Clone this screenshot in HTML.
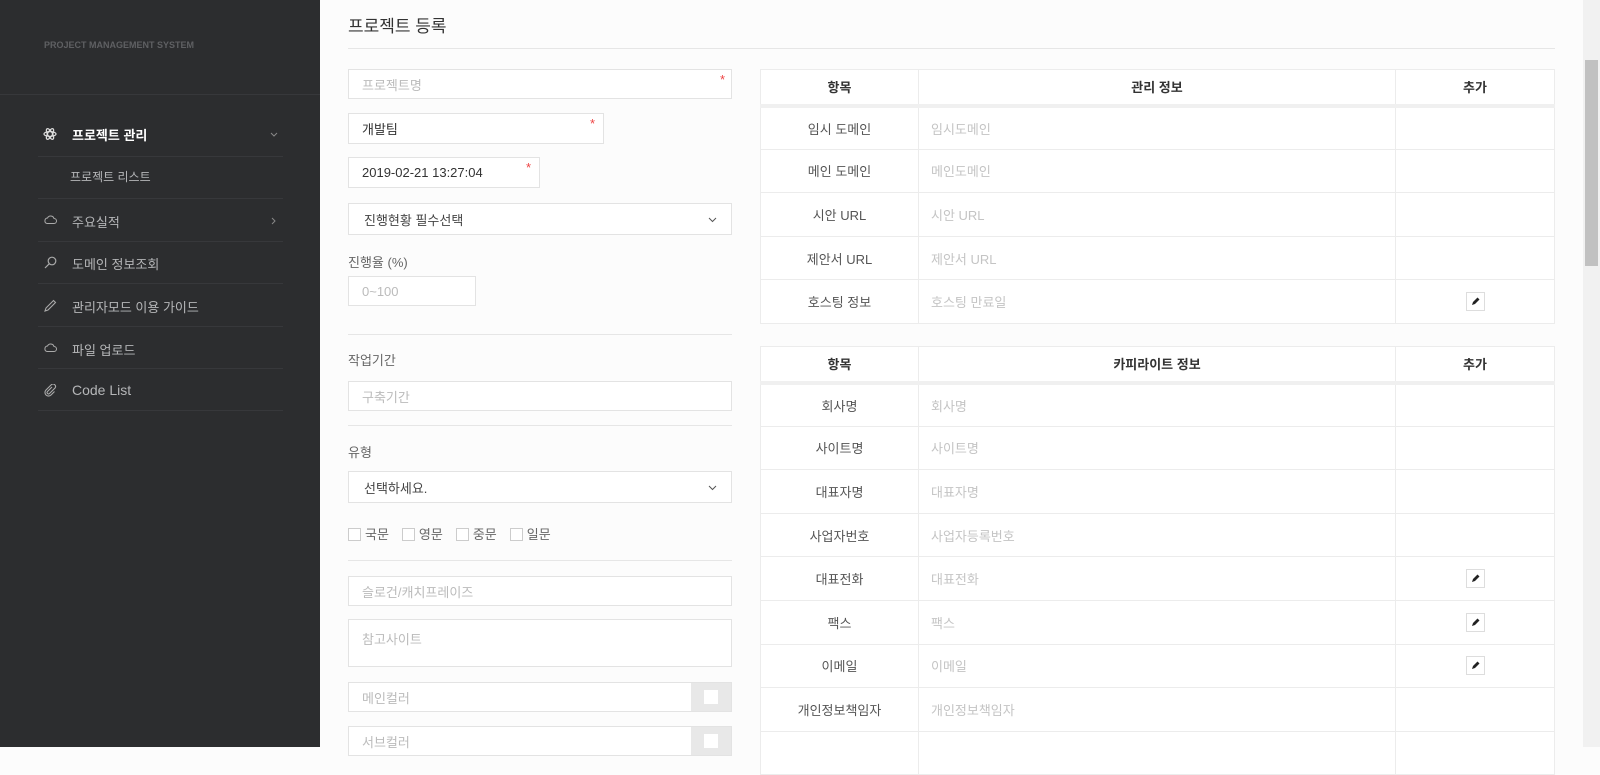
<!DOCTYPE html>
<html><head><meta charset="utf-8"><style>
*{box-sizing:border-box;margin:0;padding:0}
body{width:1600px;height:747px;overflow:hidden;background:#fcfcfc;font-family:"Liberation Sans","Noto Sans CJK KR",sans-serif;font-size:13px;color:#333;position:relative}
.sb{position:absolute;left:0;top:0;width:320px;height:747px;background:#2c2d2f}
.a{position:absolute}
.logo{left:44px;top:40px;font-size:9px;font-weight:bold;color:#5f6063;letter-spacing:0}
.sbl{height:1px;background:#37383b}
.mi{color:#b5b6b8;font-size:13px}
.inp{position:absolute;background:#fff;border:1px solid #e3e3e3;color:#bbb;padding-left:13px;display:flex;align-items:center;font-size:13px}
.lbl{position:absolute;color:#666;font-size:13px}
.hr{position:absolute;left:348px;width:384px;height:1px;background:#e6e6e6}
.star{position:absolute;color:#e44;font-size:13px;top:2px}
table{position:absolute;border-collapse:collapse;background:#fff;left:760px;width:795px;font-size:13px}
td,th{border:1px solid #ececec;height:43.6px}
th{height:36px;font-weight:bold;color:#333;border-bottom:4px solid #f0f0f0}
td.k{text-align:center;color:#555;width:158px}
td.v{color:#c4c4c4;padding-left:12px;width:477px}
.ed{display:inline-block;width:19px;height:19px;border:1px solid #ddd;background:#fff;vertical-align:middle;position:relative}
.chk{display:inline-block;width:13px;height:13px;border:1px solid #ccc;background:#fff;vertical-align:-2px;margin-right:4px}
</style></head><body>
<div class="sb">
<div class="a logo">PROJECT MANAGEMENT SYSTEM</div>
<div class="a sbl" style="left:0;top:94px;width:320px"></div>
<svg class="a" style="left:43px;top:127px" width="14" height="14" viewBox="0 0 14 14" fill="none" stroke="#ddd" stroke-width="1.2"><ellipse cx="7" cy="7" rx="6" ry="2.4"/><ellipse cx="7" cy="7" rx="6" ry="2.4" transform="rotate(60 7 7)"/><ellipse cx="7" cy="7" rx="6" ry="2.4" transform="rotate(120 7 7)"/></svg>
<div class="a" style="left:72px;top:125px;color:#fff;font-weight:bold;font-size:13px">프로젝트 관리</div>
<svg class="a" style="left:270px;top:132px" width="8" height="5" viewBox="0 0 8 5" fill="none" stroke="#888"><path d="M1 1l3 3 3-3"/></svg>
<div class="a sbl" style="left:38px;top:156px;width:245px"></div>
<div class="a mi" style="left:70px;top:168px;font-size:12px">프로젝트 리스트</div>
<div class="a sbl" style="left:38px;top:198px;width:245px"></div>
<svg class="a" style="left:44px;top:215px" width="13" height="9" viewBox="0 0 13 9" fill="none" stroke="#aaa" stroke-width="1"><path d="M3 8.5h7a2.5 2.5 0 0 0 0-5 3.5 3.5 0 0 0-6.5-.5A2.8 2.8 0 0 0 3 8.5z"/></svg>
<div class="a mi" style="left:72px;top:212px">주요실적</div>
<svg class="a" style="left:271px;top:217px" width="5" height="8" viewBox="0 0 5 8" fill="none" stroke="#888"><path d="M1 1l3 3-3 3"/></svg>
<div class="a sbl" style="left:38px;top:241px;width:245px"></div>
<svg class="a" style="left:44px;top:256px" width="13" height="13" viewBox="0 0 13 13" fill="none" stroke="#aaa" stroke-width="1.2"><circle cx="8" cy="5" r="3.8"/><path d="M5.2 7.8L1 12"/></svg>
<div class="a mi" style="left:72px;top:254px">도메인 정보조회</div>
<div class="a sbl" style="left:38px;top:283px;width:245px"></div>
<svg class="a" style="left:44px;top:299px" width="13" height="13" viewBox="0 0 13 13" fill="none" stroke="#aaa" stroke-width="1.1"><path d="M9.5 1.5l2 2L4 11l-3 1 1-3z"/></svg>
<div class="a mi" style="left:72px;top:297px">관리자모드 이용 가이드</div>
<div class="a sbl" style="left:38px;top:326px;width:245px"></div>
<svg class="a" style="left:44px;top:343px" width="13" height="9" viewBox="0 0 13 9" fill="none" stroke="#aaa" stroke-width="1"><path d="M3 8.5h7a2.5 2.5 0 0 0 0-5 3.5 3.5 0 0 0-6.5-.5A2.8 2.8 0 0 0 3 8.5z"/></svg>
<div class="a mi" style="left:72px;top:340px">파일 업로드</div>
<div class="a sbl" style="left:38px;top:368px;width:245px"></div>
<svg class="a" style="left:44px;top:384px" width="13" height="13" viewBox="0 0 13 13" fill="none" stroke="#aaa" stroke-width="1.1"><path d="M8 3L3.5 7.5a1.4 1.4 0 0 0 2 2L11 4a2.5 2.5 0 0 0-3.5-3.5L2 6a3.5 3.5 0 0 0 5 5l3.5-3.5"/></svg>
<div class="a mi" style="left:72px;top:382px;font-size:14px">Code List</div>
<div class="a sbl" style="left:38px;top:410px;width:245px"></div>
</div>

<div class="a" style="left:348px;top:12px;font-size:17px;color:#333">프로젝트 등록</div>
<div class="a" style="left:348px;top:48px;width:1207px;height:1px;background:#e6e6e6"></div>

<div class="inp" style="left:348px;top:69px;width:384px;height:30px">프로젝트명<span class="star" style="right:6px">*</span></div>
<div class="inp" style="left:348px;top:113px;width:256px;height:31px;color:#333">개발팀<span class="star" style="right:8px">*</span></div>
<div class="inp" style="left:348px;top:157px;width:192px;height:31px;color:#333">2019-02-21 13:27:04<span class="star" style="right:8px">*</span></div>
<div class="inp" style="left:348px;top:203px;width:384px;height:32px;color:#444;padding-left:15px">진행현황 필수선택<svg class="a" style="right:14px;top:13px" width="9" height="6" viewBox="0 0 9 6" fill="none" stroke="#555"><path d="M1 1l3.5 3.5L8 1"/></svg></div>
<div class="lbl" style="left:348px;top:252px">진행율 (%)</div>
<div class="inp" style="left:348px;top:276px;width:128px;height:30px">0~100</div>
<div class="hr" style="top:334px"></div>
<div class="lbl" style="left:348px;top:350px">작업기간</div>
<div class="inp" style="left:348px;top:381px;width:384px;height:30px">구축기간</div>
<div class="hr" style="top:425px"></div>
<div class="lbl" style="left:348px;top:442px">유형</div>
<div class="inp" style="left:348px;top:471px;width:384px;height:32px;color:#444;padding-left:15px">선택하세요.<svg class="a" style="right:14px;top:13px" width="9" height="6" viewBox="0 0 9 6" fill="none" stroke="#555"><path d="M1 1l3.5 3.5L8 1"/></svg></div>
<div class="a" style="left:348px;top:524px;color:#666;font-size:13px"><span class="chk"></span>국문<span style="display:inline-block;width:13px"></span><span class="chk"></span>영문<span style="display:inline-block;width:13px"></span><span class="chk"></span>중문<span style="display:inline-block;width:13px"></span><span class="chk"></span>일문</div>
<div class="hr" style="top:560px"></div>
<div class="inp" style="left:348px;top:576px;width:384px;height:30px">슬로건/캐치프레이즈</div>
<div class="inp" style="left:348px;top:619px;width:384px;height:48px;align-items:flex-start;padding-top:9px">참고사이트</div>
<div class="inp" style="left:348px;top:682px;width:384px;height:30px">메인컬러<span class="a" style="right:0;top:0;width:40px;height:28px;background:#e8e8e8"><span class="a" style="left:13px;top:7px;width:14px;height:14px;background:#fff"></span></span></div>
<div class="inp" style="left:348px;top:726px;width:384px;height:30px">서브컬러<span class="a" style="right:0;top:0;width:40px;height:28px;background:#e8e8e8"><span class="a" style="left:13px;top:7px;width:14px;height:14px;background:#fff"></span></span></div>

<table style="top:69px">
<tr><th>항목</th><th>관리 정보</th><th>추가</th></tr>
<tr><td class="k">임시 도메인</td><td class="v">임시도메인</td><td></td></tr>
<tr><td class="k">메인 도메인</td><td class="v">메인도메인</td><td></td></tr>
<tr><td class="k">시안 URL</td><td class="v">시안 URL</td><td></td></tr>
<tr><td class="k">제안서 URL</td><td class="v">제안서 URL</td><td></td></tr>
<tr><td class="k">호스팅 정보</td><td class="v">호스팅 만료일</td><td style="text-align:center"><span class="ed"><svg width="17" height="17" viewBox="0 0 17 17"><path d="M5 12l1-3 4.5-4.5 2 2L8 11z" fill="#222"/></svg></span></td></tr>
</table>
<table style="top:346px">
<tr><th>항목</th><th>카피라이트 정보</th><th>추가</th></tr>
<tr><td class="k">회사명</td><td class="v">회사명</td><td></td></tr>
<tr><td class="k">사이트명</td><td class="v">사이트명</td><td></td></tr>
<tr><td class="k">대표자명</td><td class="v">대표자명</td><td></td></tr>
<tr><td class="k">사업자번호</td><td class="v">사업자등록번호</td><td></td></tr>
<tr><td class="k">대표전화</td><td class="v">대표전화</td><td style="text-align:center"><span class="ed"><svg width="17" height="17" viewBox="0 0 17 17"><path d="M5 12l1-3 4.5-4.5 2 2L8 11z" fill="#222"/></svg></span></td></tr>
<tr><td class="k">팩스</td><td class="v">팩스</td><td style="text-align:center"><span class="ed"><svg width="17" height="17" viewBox="0 0 17 17"><path d="M5 12l1-3 4.5-4.5 2 2L8 11z" fill="#222"/></svg></span></td></tr>
<tr><td class="k">이메일</td><td class="v">이메일</td><td style="text-align:center"><span class="ed"><svg width="17" height="17" viewBox="0 0 17 17"><path d="M5 12l1-3 4.5-4.5 2 2L8 11z" fill="#222"/></svg></span></td></tr>
<tr><td class="k">개인정보책임자</td><td class="v">개인정보책임자</td><td></td></tr>
<tr><td class="k"></td><td class="v"></td><td></td></tr>
</table>

<div class="a" style="left:1583px;top:0;width:17px;height:747px;background:#f1f1f1"></div>
<div class="a" style="left:1585px;top:60px;width:13px;height:206px;background:#c1c1c1"></div>
</body></html>
